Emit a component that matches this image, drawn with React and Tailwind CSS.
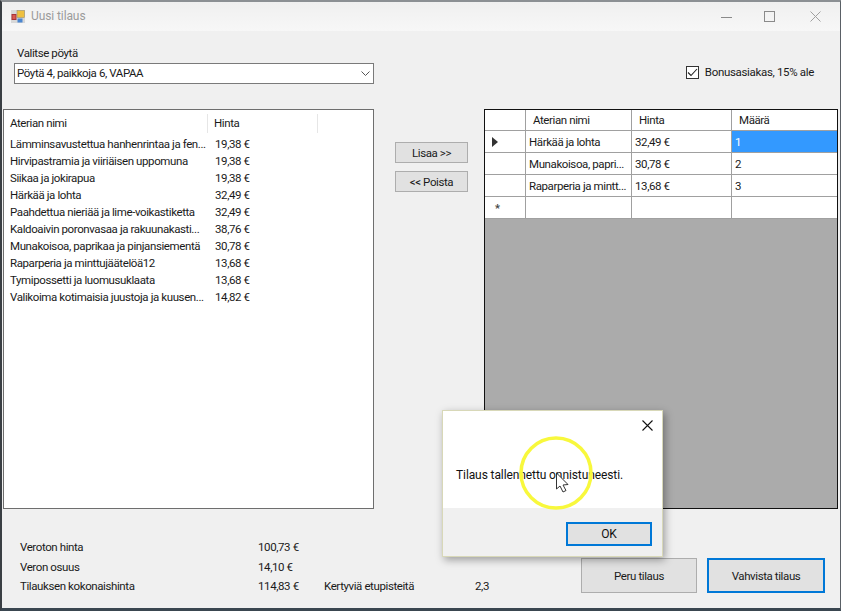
const FONT = 'font-["Roboto","Liberation_Sans",sans-serif]';

const menu = [
  ["Lämminsavustettua hanhenrintaa ja fen...", "19,38 €"],
  ["Hirvipastramia ja viiriäisen uppomuna", "19,38 €"],
  ["Siikaa ja jokirapua", "19,38 €"],
  ["Härkää ja lohta", "32,49 €"],
  ["Paahdettua nieriää ja lime-voikastiketta", "32,49 €"],
  ["Kaldoaivin poronvasaa ja rakuunakasti...", "38,76 €"],
  ["Munakoisoa, paprikaa ja pinjansiementä", "30,78 €"],
  ["Raparperia ja minttujäätelöä12", "13,68 €"],
  ["Tymipossetti ja luomusuklaata", "13,68 €"],
  ["Valikoima kotimaisia juustoja ja kuusen...", "14,82 €"],
];

const order = [
  ["Härkää ja lohta", "32,49 €", "1", true],
  ["Munakoisoa, papri...", "30,78 €", "2", false],
  ["Raparperia ja mintt...", "13,68 €", "3", false],
];

function Row({ marker, a, b, c, selected }) {
  return (
    <div className="flex h-[22px] border-b border-[#a0a0a0] items-center">
      <div className="w-[41px] h-full flex items-center border-r border-[#a0a0a0] bg-white shrink-0 pl-[7px]">
        {marker === "arrow" && (
          <svg width="6" height="10" viewBox="0 0 6 10"><path d="M0 0 L6 5 L0 10 Z" fill="#333" /></svg>
        )}
        {marker === "star" && <span className="text-[11px] leading-none font-bold text-[#444] pt-[2px] pl-[3px]">*</span>}
      </div>
      <div className="w-[106px] h-full pl-[3px] pt-px flex items-center border-r border-[#a0a0a0] whitespace-nowrap overflow-hidden shrink-0">{a}</div>
      <div className="w-[100px] h-full pl-[3px] pt-px flex items-center border-r border-[#a0a0a0] shrink-0">{b}</div>
      <div className={`flex-1 h-full pl-[3px] pt-px flex items-center ${selected ? "bg-[#3399ff] text-white" : ""}`}>{c}</div>
    </div>
  );
}

export default function App() {
  return (
    <div className={`relative w-[841px] h-[611px] overflow-hidden bg-[#f0f0f0] text-[11.5px] tracking-[-0.4px] leading-[17px] text-[#1a1a1a] ${FONT}`}>
      <div className="flex flex-col h-full border-t-2 border-l-2 border-r border-b-[3px] border-t-[#8c9094] border-l-[#3a3f44] border-r-[#5a6066] border-b-[#3a4650]">
        {/* Title bar */}
        <div className="h-[29px] shrink-0 bg-gradient-to-b from-[#f0f0f0] to-[#f7f7f7] flex items-center pl-[9px]">
          <svg width="14" height="13" viewBox="0 0 14 13" className="shrink-0">
            <rect x="0" y="0" width="14" height="13" fill="#d8d8d8" />
            <rect x="0.5" y="4" width="5" height="6" fill="#a8323a" />
            <rect x="1.5" y="5" width="3" height="4" fill="#d85a50" />
            <rect x="6" y="0.5" width="7.5" height="7" fill="#eec040" stroke="#9a9070" strokeWidth="0.6" />
            <rect x="6.5" y="8.5" width="5" height="4" fill="#4a86d0" />
          </svg>
          <span className="ml-[6px] text-[#9b9b9b] text-[12px] tracking-[-0.1px]">Uusi tilaus</span>
          <div className="ml-auto flex items-center text-[#8a8a8a]">
            <svg width="12" height="12" viewBox="0 0 12 12" className="mr-[31px]"><path d="M0 6.5 H11" stroke="#8a8a8a" /></svg>
            <svg width="11" height="11" viewBox="0 0 11 11" className="mr-[35px]"><rect x="0.5" y="0.5" width="10" height="10" fill="none" stroke="#8a8a8a" /></svg>
            <svg width="11" height="11" viewBox="0 0 11 11" className="mr-[19px]"><path d="M0.5 0.5 L10.5 10.5 M10.5 0.5 L0.5 10.5" stroke="#a0a0a0" /></svg>
          </div>
        </div>

        {/* Top controls */}
        <div className="h-[78px] shrink-0 flex pl-[12px] pr-[25px]">
          <div className="pt-[14px] w-[360px]">
            <div className="pl-[3px] h-[17px]">Valitse pöytä</div>
            <div className="mt-[1px] h-[21px] bg-white border border-[#7a7a7a] flex items-center pl-[2px] pr-[3px]">
              <span>Pöytä 4, paikkoja 6, VAPAA</span>
              <svg width="9" height="6" viewBox="0 0 9 6" className="ml-auto"><path d="M0.5 0.5 L4.5 4.5 L8.5 0.5" fill="none" stroke="#555" /></svg>
            </div>
          </div>
          <div className="ml-auto mt-[33px] h-[17px] flex items-center pr-px tracking-[-0.33px]">
            <div className="w-[13px] h-[13px] border border-[#333] bg-white flex items-center justify-center mr-[6px]">
              <svg width="11" height="9" viewBox="0 0 11 9"><path d="M1 4.5 L4 7.5 L10 1" fill="none" stroke="#222" strokeWidth="1.1" /></svg>
            </div>
            <span>Bonusasiakas, 15% ale</span>
          </div>
        </div>

        {/* Middle */}
        <div className="h-[400px] shrink-0 flex pl-px">
          <div className="w-[371px] shrink-0 bg-white border border-[#6e6e6e] pt-[4px]">
            <div className="flex h-[19px] items-center">
              <div className="w-[204px] h-full pl-[6px] border-r border-[#e6e6e6] flex items-center">Aterian nimi</div>
              <div className="w-[110px] h-full pl-[6px] border-r border-[#e6e6e6] flex items-center">Hinta</div>
            </div>
            <div className="mt-[3px]">
              {menu.map(([n, p]) => (
                <div key={n} className="flex h-[17px] items-center">
                  <div className="w-[204px] pl-[6px] whitespace-nowrap shrink-0">{n}</div>
                  <div className="pl-[7px]">{p}</div>
                </div>
              ))}
            </div>
          </div>

          <div className="w-[110px] shrink-0 pl-[21px] pt-[33px] flex flex-col gap-[8px]">
            <div className="w-[73px] h-[21px] pt-px bg-[#e1e1e1] border border-[#adadad] flex items-center justify-center">Lisaa &gt;&gt;</div>
            <div className="w-[73px] h-[21px] pt-px bg-[#e1e1e1] border border-[#adadad] flex items-center justify-center">&lt;&lt; Poista</div>
          </div>

          <div className="w-[354px] shrink-0 border border-[#111] bg-[#ababab]">
            <div className="flex h-[21px] bg-white items-center border-b border-[#a0a0a0]">
              <div className="w-[41px] h-full border-r border-[#a0a0a0] shrink-0" />
              <div className="w-[106px] h-full pl-[7px] border-r border-[#a0a0a0] flex items-center shrink-0">Aterian nimi</div>
              <div className="w-[100px] h-full pl-[7px] border-r border-[#a0a0a0] flex items-center shrink-0">Hinta</div>
              <div className="flex-1 pl-[7px]">Määrä</div>
            </div>
            <div className="bg-white">
              {order.map(([a, b, c, s], i) => (
                <Row key={a} marker={i === 0 ? "arrow" : ""} a={a} b={b} c={c} selected={s} />
              ))}
              <Row marker="star" a="" b="" c="" />
            </div>
          </div>
        </div>

        {/* Bottom */}
        <div className="flex-1 flex relative pl-[18px]">
          <div className="pt-[29px] grid grid-cols-[238px_66px_151px_auto] grid-rows-[19px_20px_19px] items-center">
            <div>Veroton hinta</div><div className="whitespace-nowrap">100,73 €</div><div /><div />
            <div>Veron osuus</div><div className="whitespace-nowrap">14,10 €</div><div /><div />
            <div>Tilauksen kokonaishinta</div><div className="whitespace-nowrap">114,83 €</div><div>Kertyviä etupisteitä</div><div>2,3</div>
          </div>
          <div className="ml-auto pr-[15px] pt-[49px] flex gap-[10px]">
            <div className="w-[116px] h-[35px] pt-[2px] bg-[#e1e1e1] border border-[#adadad] flex items-center justify-center">Peru tilaus</div>
            <div className="w-[118px] h-[35px] pt-[2px] bg-[#e1e1e1] border-2 border-[#0078d7] flex items-center justify-center">Vahvista tilaus</div>
          </div>
        </div>
      </div>

      {/* Message box */}
      <div className="absolute left-[442px] top-[410px] w-[221px] h-[147px] flex flex-col bg-white border border-[#d8d8b8] shadow-[2px_3px_8px_rgba(0,0,0,0.35)] text-[12px] tracking-[-0.1px]">
        <div className="h-[97px] bg-white relative shrink-0">
          <svg width="11" height="11" viewBox="0 0 11 11" className="absolute right-[9px] top-[9px]"><path d="M0.5 0.5 L10.5 10.5 M10.5 0.5 L0.5 10.5" stroke="#111" strokeWidth="1.1" /></svg>
          <div className="pl-[13px] pt-[56px] text-[#111] whitespace-nowrap">Tilaus tallennettu onnistuneesti.</div>
        </div>
        <div className="flex-1 bg-[#f0f0f0] flex justify-end items-start pt-[14px] pr-[10px]">
          <div className="w-[86px] h-[24px] bg-[#e1e1e1] border-2 border-[#0078d7] flex items-center justify-center text-[#111]">OK</div>
        </div>
      </div>

      {/* Cursor highlight */}
      <svg width="841" height="611" className="absolute left-0 top-0 pointer-events-none">
        <circle cx="556" cy="473" r="35" fill="none" stroke="#f8f83c" strokeWidth="3.5" />
        <path d="M556.5 473 L556.5 489 L560 486 L563 492 L566 490.5 L563 485 L568 484.5 Z" fill="#fff" stroke="#333" strokeWidth="1" />
      </svg>
    </div>
  );
}
